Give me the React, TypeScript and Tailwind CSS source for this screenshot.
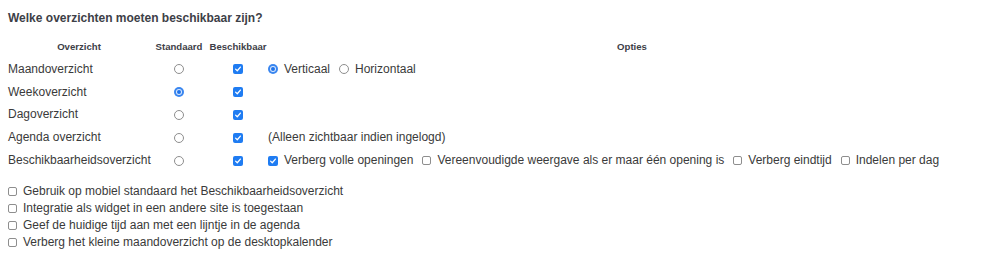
import React from "react";

const Radio = ({ checked = false }: { checked?: boolean }) =>
  checked ? (
    <span className="inline-flex h-[10px] w-[10px] shrink-0 items-center justify-center rounded-full bg-[#3a86ef]">
      <span className="flex h-[6px] w-[6px] items-center justify-center rounded-full bg-[#dbe9fc]">
        <span className="h-[4px] w-[4px] rounded-full bg-[#1f73ea]" />
      </span>
    </span>
  ) : (
    <span className="inline-block h-[10px] w-[10px] shrink-0 rounded-full border border-[#8e8e8e] bg-white" />
  );

const Check = ({ checked = false }: { checked?: boolean }) =>
  checked ? (
    <span className="inline-flex h-[10px] w-[10px] shrink-0 items-center justify-center rounded-[2px] bg-[#1f7cf2]">
      <svg viewBox="0 0 10 10" className="h-[8px] w-[8px]">
        <path d="M2 5.2 L4.1 7.2 L8 2.6" fill="none" stroke="white" strokeWidth="1.6" strokeLinecap="round" strokeLinejoin="round" />
      </svg>
    </span>
  ) : (
    <span className="inline-block h-[9px] w-[9px] shrink-0 rounded-[2px] border border-[#8e8e8e] bg-white" />
  );

const Opt = ({ children, checked, radio }: { children: React.ReactNode; checked?: boolean; radio?: boolean }) => (
  <span className="mr-[9px] inline-flex items-center gap-[6px]">
    {radio ? <Radio checked={checked} /> : <Check checked={checked} />}
    <span>{children}</span>
  </span>
);

const rows = [
  {
    name: "Maandoverzicht",
    std: false,
    opts: (
      <>
        <Opt radio checked>Verticaal</Opt>
        <Opt radio>Horizontaal</Opt>
      </>
    ),
  },
  { name: "Weekoverzicht", std: true, opts: null },
  { name: "Dagoverzicht", std: false, opts: null },
  { name: "Agenda overzicht", std: false, opts: <span>(Alleen zichtbaar indien ingelogd)</span> },
  {
    name: "Beschikbaarheidsoverzicht",
    std: false,
    opts: (
      <>
        <Opt checked>Verberg volle openingen</Opt>
        <Opt>Vereenvoudigde weergave als er maar één opening is</Opt>
        <Opt>Verberg eindtijd</Opt>
        <Opt>Indelen per dag</Opt>
      </>
    ),
  },
];

const extras = [
  "Gebruik op mobiel standaard het Beschikbaarheidsoverzicht",
  "Integratie als widget in een andere site is toegestaan",
  "Geef de huidige tijd aan met een lijntje in de agenda",
  "Verberg het kleine maandoverzicht op de desktopkalender",
];

const cols = "grid grid-cols-[142px_58px_60px_728px]";

export default function App() {
  return (
    <div className="h-[256px] w-[984px] overflow-hidden bg-white pl-[8px] pt-[11px] font-['Liberation_Sans',Arial,sans-serif] text-[12px] text-[#3a3a3a]">
      <div className="h-[15px] text-[12px] font-bold leading-[15px] text-[#3d4047]">
        Welke overzichten moeten beschikbaar zijn?
      </div>

      <div className={`${cols} mt-[15px] h-[12px] text-[9.6px] font-bold leading-[12px] text-[#3d4047]`}>
        <div className="text-center">Overzicht</div>
        <div className="text-center">Standaard</div>
        <div className="text-center">Beschikbaar</div>
        <div className="text-center">Opties</div>
      </div>

      <div className="mt-[5px]">
        {rows.map((r) => (
          <div key={r.name} className={`${cols} h-[22.8px] items-center leading-[15px]`}>
            <div className="whitespace-nowrap">{r.name}</div>
            <div className="flex justify-center">
              <Radio checked={r.std} />
            </div>
            <div className="flex justify-center">
              <Check checked />
            </div>
            <div className="flex items-center whitespace-nowrap">{r.opts}</div>
          </div>
        ))}
      </div>

      <div className="mt-[11px] flex flex-col">
        {extras.map((t) => (
          <div key={t} className="flex h-[17px] items-center gap-[6px] leading-[15px]">
            <Check />
            <span>{t}</span>
          </div>
        ))}
      </div>
    </div>
  );
}
